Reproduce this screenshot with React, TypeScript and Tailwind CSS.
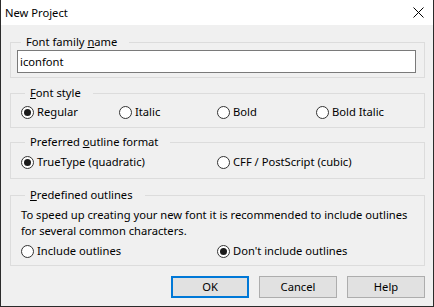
import React from "react";

function Radio({ label, checked }: { label: string; checked?: boolean }) {
  return (
    <div className="flex items-center h-[16px]">
      <span className="w-[13px] h-[13px] rounded-full border border-[#333333] bg-white flex items-center justify-center shrink-0">
        {checked && <span className="w-[7px] h-[7px] rounded-full bg-[#1a1a1a]"></span>}
      </span>
      <span className="ml-[3px] whitespace-nowrap">{label}</span>
    </div>
  );
}

function Legend({ children }: { children: React.ReactNode }) {
  return (
    <legend className="ml-[4px] pl-[5px] pr-[12px] h-[16px] leading-[16px] whitespace-nowrap">
      {children}
    </legend>
  );
}

export default function App() {
  return (
    <div
      className="w-[434px] h-[307px] flex flex-col bg-[#f0f0f0] border-x border-b border-[#2b2b2b] text-[11.2px] leading-[16px] text-black"
      style={{ fontFamily: '"Noto Sans", sans-serif' }}
    >
      {/* title bar */}
      <div className="h-[25px] bg-white flex items-center justify-between pl-[4px] pr-[9px] shrink-0">
        <span>New Project</span>
        <svg width="11" height="11" viewBox="0 0 11 11">
          <path d="M0.5 0.5 L10.5 10.5 M10.5 0.5 L0.5 10.5" stroke="#000" strokeWidth="1" />
        </svg>
      </div>

      <div className="flex flex-col pl-[9px] pr-[8px] pt-[9px]">
        <fieldset className="border border-[#dcdcdc] pl-[6px] pb-[4px]">
          <Legend>
            Font family <u>n</u>ame
          </Legend>
          <div className="w-[399px] h-[23px] bg-white border border-[#7a7a7a] flex items-center pl-[2px]">
            iconfont
          </div>
        </fieldset>

        <fieldset className="mt-[7px] border border-[#dcdcdc] pl-[10px] pb-[7px]">
          <Legend>
            <u>F</u>ont style
          </Legend>
          <div className="mt-[3px] flex">
            <div className="w-[98px]">
              <Radio label="Regular" checked />
            </div>
            <div className="w-[98px]">
              <Radio label="Italic" />
            </div>
            <div className="w-[99px]">
              <Radio label="Bold" />
            </div>
            <div>
              <Radio label="Bold Italic" />
            </div>
          </div>
        </fieldset>

        <fieldset className="mt-[6px] border border-[#dcdcdc] pl-[10px] pb-[8px]">
          <Legend>
            Preferred <u>o</u>utline format
          </Legend>
          <div className="mt-[4px] flex">
            <div className="w-[196px]">
              <Radio label="TrueType (quadratic)" checked />
            </div>
            <div>
              <Radio label="CFF / PostScript (cubic)" />
            </div>
          </div>
        </fieldset>

        <fieldset className="mt-[8px] border border-[#dcdcdc] pl-[10px] pb-[6px]">
          <Legend>
            <u>P</u>redefined outlines
          </Legend>
          <p className="mt-[4px] whitespace-nowrap">
            To speed up creating your new font it is recommended to include outlines
            <br />
            for several common characters.
          </p>
          <div className="mt-[4px] flex">
            <div className="w-[196px]">
              <Radio label="Include outlines" />
            </div>
            <div>
              <Radio label="Don't include outlines" checked />
            </div>
          </div>
        </fieldset>

        <div className="mt-[10px] flex justify-end gap-[10px]">
          <button className="w-[78px] h-[22px] bg-[#e1e1e1] border-2 border-[#0078d7] flex items-center justify-center">
            OK
          </button>
          <button className="w-[78px] h-[22px] bg-[#e1e1e1] border border-[#adadad] flex items-center justify-center">
            Cancel
          </button>
          <button className="w-[78px] h-[22px] bg-[#e1e1e1] border border-[#adadad] flex items-center justify-center">
            Help
          </button>
        </div>
      </div>
    </div>
  );
}
